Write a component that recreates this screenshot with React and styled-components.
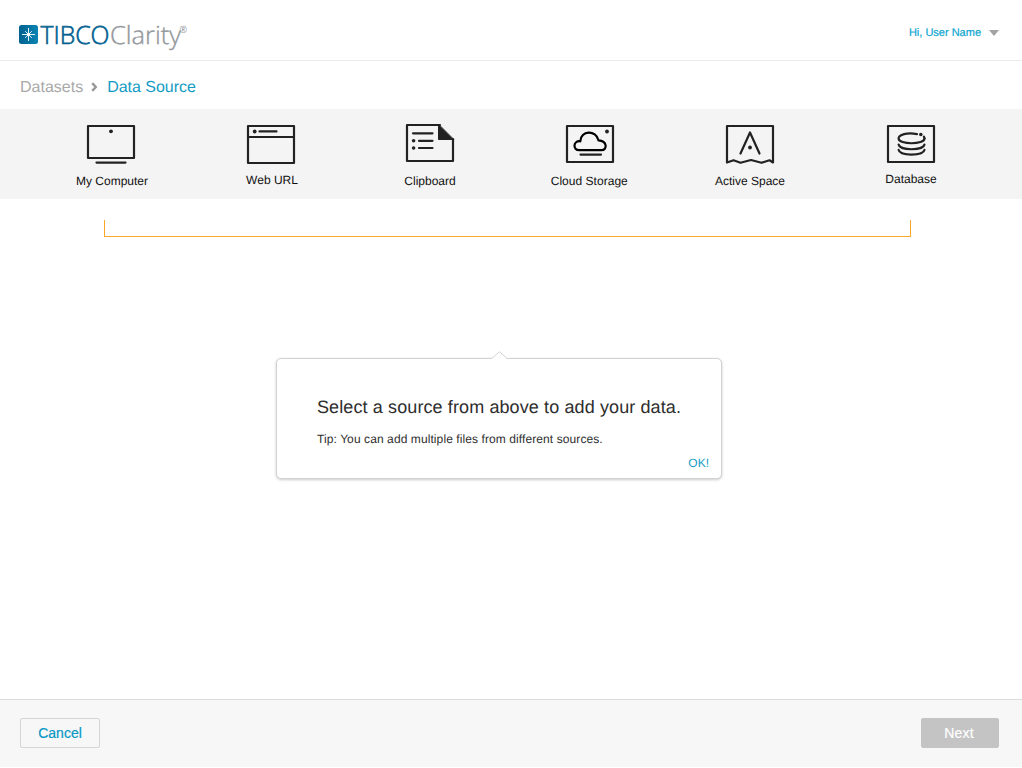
import React from 'react';
import styled, { createGlobalStyle } from 'styled-components';

const GlobalStyle = createGlobalStyle`
  * { box-sizing: border-box; }
  body {
    margin: 0;
    background: #fff;
    color: #222;
    font-family: "Liberation Sans", Arial, Helvetica, sans-serif;
    text-rendering: geometricPrecision;
  }
`;

const Page = styled.div`
  display: flex;
  flex-direction: column;
  height: 767px;
  width: 100%;
`;

const Header = styled.header`
  display: flex;
  justify-content: space-between;
  height: 61px;
  border-bottom: 1px solid #ebebeb;
  padding: 14px 23px 0 18px;
`;

const Logo = styled.svg`
  display: block;
  width: 180px;
  height: 44px;
`;

const UserMenu = styled.div`
  display: flex;
  align-items: center;
  gap: 8px;
  height: 37px;
  font-size: 11px;
  color: #0aa5cf;
  -webkit-text-stroke: 0.2px #0aa5cf;
`;

const UserName = styled.span`
  padding-top: 2px;
  line-height: 13px;
`;

const Caret = styled.span`
  border: 5px solid transparent;
  border-top: 6px solid #a3a3a3;
  border-bottom: 0;
`;

const Breadcrumb = styled.nav`
  display: flex;
  align-items: center;
  height: 48px;
  padding: 6px 20px 0;
  font-size: 16px;
  line-height: 18px;
`;

const Crumb = styled.span`
  color: ${(p) => (p.$current ? '#149bc4' : '#a9a9a9')};
  letter-spacing: ${(p) => (p.$current ? '-0.02px' : '0')};
`;

const Chevron = styled.svg`
  width: 8px;
  height: 10px;
  margin: 0 9px 2px 7px;
`;

const SourceBar = styled.section`
  display: flex;
  height: 90px;
  padding-left: 31px;
  background: #f4f4f4;
`;

const Source = styled.div`
  display: flex;
  flex-direction: column;
  align-items: center;
  width: 160px;
  margin-left: ${(p) => p.$nudge || 0}px;
  padding-top: 14px;
`;

const Icon = styled.svg`
  display: block;
  width: 50px;
  height: 42px;
  fill: none;
  stroke: #222;
  stroke-width: 2.2;
  stroke-linecap: round;
  stroke-linejoin: round;
`;

const SourceLabel = styled.span`
  margin-top: ${(p) => p.$gap}px;
  padding-left: ${(p) => p.$shift || 0}px;
  padding-right: ${(p) => p.$inset || 0}px;
  font-size: 12px;
  line-height: 16px;
  letter-spacing: ${(p) => p.$tracking || 0}px;
  color: #111;
  white-space: nowrap;
`;

const Workspace = styled.main`
  flex: 1;
  display: flex;
  flex-direction: column;
  padding-top: 21px;
`;

const Bracket = styled.div`
  width: 807px;
  height: 17px;
  margin-left: 104px;
  border: 1px solid #f9a72b;
  border-top: 0;
`;

const Popover = styled.div`
  position: relative;
  display: flex;
  flex-direction: column;
  width: 446px;
  height: 121px;
  margin: 121px 0 0 276px;
  padding: 37px 12px 0 40px;
  border: 1px solid #d2d2d2;
  border-radius: 5px;
  background: #fff;
  box-shadow: 0 1px 3px rgba(0, 0, 0, 0.2);
`;

const Pointer = styled.svg`
  position: absolute;
  top: -8px;
  left: 214px;
  width: 17px;
  height: 9px;
`;

const Prompt = styled.div`
  font-size: 18px;
  line-height: 22px;
  letter-spacing: 0.11px;
  white-space: nowrap;
  color: #2e2e2e;
`;

const Tip = styled.div`
  margin-top: 13px;
  font-size: 12px;
  line-height: 16px;
  letter-spacing: 0.09px;
  white-space: nowrap;
  color: #2e2e2e;
`;

const Confirm = styled.a`
  align-self: flex-end;
  margin-top: 8px;
  font-size: 12px;
  line-height: 16px;
  color: #149bc4;
`;

const Footer = styled.footer`
  display: flex;
  justify-content: space-between;
  height: 68px;
  padding: 18px 23px 0 20px;
  border-top: 1px solid #dcdcdc;
  background: #f7f7f7;
`;

const Button = styled.button`
  width: ${(p) => (p.$muted ? 78 : 80)}px;
  height: 30px;
  padding: 0 ${(p) => (p.$muted ? 2 : 0)}px 0 0;
  border: 1px solid ${(p) => (p.$muted ? '#c4c4c4' : '#d5d5d5')};
  border-radius: 2px;
  background: ${(p) => (p.$muted ? '#c4c4c4' : '#f7f7f7')};
  color: ${(p) => (p.$muted ? '#fff' : '#0898c5')};
  -webkit-text-stroke: 0.2px currentColor;
  font: 14px "Liberation Sans", Arial, sans-serif;
  letter-spacing: ${(p) => (p.$muted ? 0.15 : 0)}px;
`;

const ComputerIcon = () => (
  <Icon viewBox="0 0 50 42">
    <rect x="2" y="3" width="46" height="32" />
    <circle cx="25" cy="8.3" r="1.9" fill="#222" stroke="none" />
    <path d="M10.5 39.6H39.5" />
  </Icon>
);

const BrowserIcon = () => (
  <Icon viewBox="0 0 50 42">
    <rect x="2" y="3" width="46" height="37" />
    <path d="M2 14H48M13.5 8.4H30.5" />
    <circle cx="8.7" cy="8.5" r="1.9" fill="#222" stroke="none" />
  </Icon>
);

const ClipboardIcon = () => (
  <Icon viewBox="0 0 50 42">
    <path d="M35 2H2V38H48V16" />
    <path d="M33.5 1.5V16.5H48.5Z" fill="#222" strokeWidth="1" />
    <path d="M8 10.3H27.5M14 17.8H27.5M14 25H27.5" />
    <circle cx="8.6" cy="17.8" r="1.8" fill="#222" stroke="none" />
    <circle cx="8.6" cy="25" r="1.8" fill="#222" stroke="none" />
  </Icon>
);

const CloudIcon = () => (
  <Icon viewBox="0 0 50 42">
    <rect x="2" y="3" width="46" height="36" />
    <path
      d="M14.2 27.2C7.5 27.2 8 17.3 15.3 18.3C15.5 7.3 31.2 6.5 33.5 17.3C42.5 17.8 42.5 27.2 36.5 27.2Z"
      stroke="#000"
    />
    <path d="M15.5 31.6H36" />
    <circle cx="42" cy="8.5" r="1.9" fill="#222" stroke="none" />
  </Icon>
);

const SpaceIcon = () => (
  <Icon viewBox="0 0 50 42">
    <path d="M2 39.5V3H48V39.5L44.5 37.3L36.5 39.8L26 37L15.5 39.8L8.5 37.3Z" />
    <path d="M15.5 30.5L25 9.5L34.5 30.5" />
    <circle cx="25" cy="24.5" r="1.9" fill="#222" stroke="none" />
  </Icon>
);

const DatabaseIcon = () => (
  <Icon viewBox="0 0 50 42">
    <rect x="2" y="3" width="46" height="36" />
    <path d="M31 11.1C21 9.3 12.6 11.5 12.6 15.5C12.6 21.8 38.5 21.8 38.5 15.5" />
    <path d="M38.5 15.5C38.5 14.8 38.3 14.2 37.9 13.7M12.6 21.5C13.8 27.8 37.3 27.8 38.5 21.5M12.6 26.9C13.8 33.2 37.3 33.2 38.5 26.9" />
    <circle cx="34.8" cy="11.5" r="1.8" fill="#222" stroke="none" />
  </Icon>
);

const sources = [
  { label: 'My Computer', Glyph: ComputerIcon, gap: 8, shift: 2 },
  { label: 'Web URL', Glyph: BrowserIcon, gap: 7, shift: 2 },
  { label: 'Clipboard', Glyph: ClipboardIcon, gap: 8, nudge: -1 },
  { label: 'Cloud Storage', Glyph: CloudIcon, gap: 8, tracking: 0.03, inset: 1.5 },
  { label: 'Active Space', Glyph: SpaceIcon, gap: 8 },
  { label: 'Database', Glyph: DatabaseIcon, gap: 6, nudge: 1 },
];

export default function App() {
  return (
    <Page>
      <GlobalStyle />
      <Header>
        <Logo viewBox="0 -6 180 44" fontFamily='"Open Sans", "Noto Sans", sans-serif'>
          <defs>
            <linearGradient id="mark" x1="0" y1="0" x2="1" y2="0">
              <stop offset="0" stopColor="#00618f" />
              <stop offset="1" stopColor="#0b84b3" />
            </linearGradient>
          </defs>
          <rect x="1" y="5" width="19" height="19" rx="2.5" fill="url(#mark)" />
          <path
            d="M10.5 8V21M4 14.5H17M7.2 11.2L13.8 17.8M13.8 11.2L7.2 17.8"
            fill="none"
            stroke="#fff"
            strokeWidth="0.9"
          />
          <circle cx="10.5" cy="14.5" r="1.6" fill="#fff" />
          <text x="22.5" y="24" fontSize="25" fontWeight="300" fill="#00618f" stroke="#00618f" strokeWidth="0.6" textLength="69" lengthAdjust="spacingAndGlyphs">TIBCO</text>
          <text x="92" y="24" fontSize="25" fontWeight="300" fill="#93979b" stroke="#93979b" strokeWidth="0.35" textLength="71" lengthAdjust="spacingAndGlyphs">Clarity</text>
          <text x="161.5" y="13" fontSize="10" fill="#93979b" textLength="7.5" lengthAdjust="spacingAndGlyphs">®</text>
        </Logo>
        <UserMenu>
          <UserName>Hi, User Name</UserName>
          <Caret />
        </UserMenu>
      </Header>
      <Breadcrumb>
        <Crumb>Datasets</Crumb>
        <Chevron viewBox="0 0 8 10">
          <path d="M2.2 1.2L5.8 5L2.2 8.8" fill="none" stroke="#999" strokeWidth="2.4" />
        </Chevron>
        <Crumb $current>Data Source</Crumb>
      </Breadcrumb>
      <SourceBar>
        {sources.map(({ label, Glyph, gap, shift, inset, nudge, tracking }) => (
          <Source key={label} $nudge={nudge}>
            <Glyph />
            <SourceLabel $gap={gap} $shift={shift} $inset={inset} $tracking={tracking}>{label}</SourceLabel>
          </Source>
        ))}
      </SourceBar>
      <Workspace>
        <Bracket />
        <Popover>
          <Pointer viewBox="0 0 17 9">
            <path d="M0 9V8L1 7.5L8.5 0.7L16 7.5L17 8V9Z" fill="#fff" />
            <path d="M0.5 7.7L8.5 0.7L16.5 7.7" fill="none" stroke="#d2d2d2" />
          </Pointer>
          <Prompt>Select a source from above to add your data.</Prompt>
          <Tip>Tip: You can add multiple files from different sources.</Tip>
          <Confirm>OK!</Confirm>
        </Popover>
      </Workspace>
      <Footer>
        <Button>Cancel</Button>
        <Button $muted>Next</Button>
      </Footer>
    </Page>
  );
}
